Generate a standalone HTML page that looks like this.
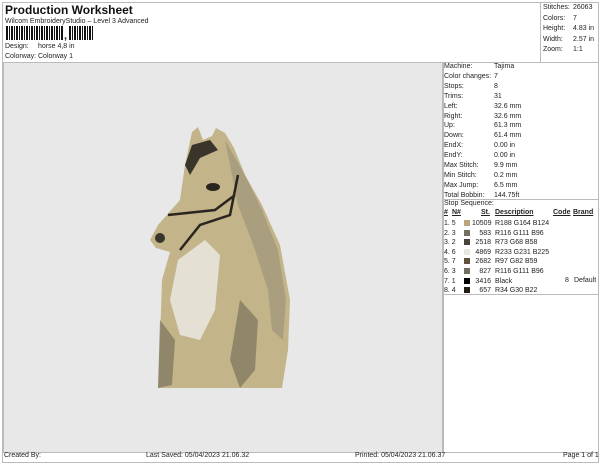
<!DOCTYPE html>
<html><head><style>
body{margin:0;width:600px;height:464px;background:#fff;font-family:"Liberation Sans",Arial,sans-serif;color:#222;position:relative;overflow:hidden}
.a{position:absolute;font-size:7px;white-space:nowrap}
.b{position:absolute;border:1px solid #bbb}
</style></head><body>
<div class="b" style="left:2px;top:2px;width:595px;height:459px"></div>
<div class="b" style="left:540px;top:2px;width:57px;height:59px"></div>
<div class="a" style="left:5px;top:3px;font-size:12px;font-weight:bold;color:#111">Production Worksheet</div>
<div class="a" style="left:5px;top:18px">Wilcom EmbroideryStudio – Level 3 Advanced</div>
<div style="position:absolute;left:6px;top:26px;width:58px;height:14px;background:repeating-linear-gradient(90deg,#111 0 2px,#fff 2px 3px,#111 3px 4px,#fff 4px 5px)"></div>
<div class="a" style="left:64px;top:30px;font-size:11px;font-weight:bold">,</div>
<div style="position:absolute;left:69px;top:26px;width:25px;height:14px;background:repeating-linear-gradient(90deg,#111 0 2px,#fff 2px 3px,#111 3px 4px,#fff 4px 5px)"></div>
<div class="a" style="left:5px;top:43px">Design:</div><div class="a" style="left:38px;top:43px">horse 4,8 in</div>
<div class="a" style="left:5px;top:53px">Colorway:</div><div class="a" style="left:38px;top:53px">Colorway 1</div>
<div class="a" style="left:543px;top:3px;line-height:10.5px">Stitches:<br>Colors:<br>Height:<br>Width:<br>Zoom:</div>
<div class="a" style="left:573px;top:3px;line-height:10.5px">26063<br>7<br>4.83 in<br>2.57 in<br>1:1</div>
<div style="position:absolute;left:3px;top:62px;width:439px;height:389px;background:#e8e8e8;border:1px solid #bbb"></div>
<div class="b" style="left:442px;top:62px;width:155px;height:389px"></div>
<div style="position:absolute;left:442px;top:199px;width:156px;border-top:1px solid #bbb"></div>
<div style="position:absolute;left:442px;top:294px;width:156px;border-top:1px solid #bbb"></div>
<div class="a" style="left:444px;top:62px;line-height:9.9px">Machine:<br>Color changes:<br>Stops:<br>Trims:<br>Left:<br>Right:<br>Up:<br>Down:<br>EndX:<br>EndY:<br>Max Stitch:<br>Min Stitch:<br>Max Jump:<br>Total Bobbin:</div>
<div class="a" style="left:494px;top:62px;line-height:9.9px">Tajima<br>7<br>8<br>31<br>32.6 mm<br>32.6 mm<br>61.3 mm<br>61.4 mm<br>0.00 in<br>0.00 in<br>9.9 mm<br>0.2 mm<br>6.5 mm<br>144.75ft</div>
<div class="a" style="left:444px;top:200px">Stop Sequence:</div>
<div class="a" style="left:444px;top:209px;font-weight:bold;text-decoration:underline">#</div>
<div class="a" style="left:452px;top:209px;font-weight:bold;text-decoration:underline">N#</div>
<div class="a" style="left:481px;top:209px;font-weight:bold;text-decoration:underline">St.</div>
<div class="a" style="left:495px;top:209px;font-weight:bold;text-decoration:underline">Description</div>
<div class="a" style="left:553px;top:209px;font-weight:bold;text-decoration:underline">Code</div>
<div class="a" style="left:573px;top:209px;font-weight:bold;text-decoration:underline">Brand</div>
<div class="a" style="left:444px;top:219px;line-height:9.6px">1. 5<br>2. 3<br>3. 2<br>4. 6<br>5. 7<br>6. 3<br>7. 1<br>8. 4</div>
<div style="position:absolute;left:464px;top:220px;width:6px">
<div style="height:6px;background:#bca47c;margin-bottom:3.6px"></div>
<div style="height:6px;background:#746f60;margin-bottom:3.6px"></div>
<div style="height:6px;background:#49443a;margin-bottom:3.6px"></div>
<div style="height:6px;background:#e9e7e1;margin-bottom:3.6px"></div>
<div style="height:6px;background:#61523b;margin-bottom:3.6px"></div>
<div style="height:6px;background:#746f60;margin-bottom:3.6px"></div>
<div style="height:6px;background:#000;margin-bottom:3.6px"></div>
<div style="height:6px;background:#221e16"></div></div>
<div class="a" style="left:472px;top:219px;line-height:9.6px;width:19px;text-align:right">10509<br>583<br>2518<br>4869<br>2682<br>827<br>3416<br>657</div>
<div class="a" style="left:495px;top:219px;line-height:9.6px">R188 G164 B124<br>R116 G111 B96<br>R73 G68 B58<br>R233 G231 B225<br>R97 G82 B59<br>R116 G111 B96<br>Black<br>R34 G30 B22</div>
<div class="a" style="left:565px;top:276.6px">8</div><div class="a" style="left:574px;top:276.6px">Default</div>
<div class="a" style="left:4px;top:452px">Created By:</div>
<div class="a" style="left:146px;top:452px">Last Saved: 05/04/2023 21.06.32</div>
<div class="a" style="left:355px;top:452px">Printed: 05/04/2023 21.06.37</div>
<div class="a" style="left:563px;top:452px">Page 1 of 1</div>
<svg style="position:absolute;left:0;top:0" width="600" height="464">
<path d="M192 132 L198 127 L203 140 L212 136 L216 128 L225 133 L234 148 L245 175 L262 205 L280 245 L290 300 L288 350 L282 388 L158 388 L160 340 L162 280 L170 252 L156 248 L150 240 L158 225 L180 200 L185 165 Z" fill="#c4b48a"/>
<path d="M178 260 L205 240 L220 255 L215 310 L200 340 L180 335 L170 300 Z" fill="#e4e1d4"/>
<path d="M225 140 L245 175 L262 210 L278 250 L286 300 L283 340 L272 330 L268 290 L255 250 L238 205 Z" fill="#9e9479" opacity=".7"/>
<path d="M160 320 L175 340 L172 385 L158 388 Z M240 300 L258 320 L255 370 L240 388 L230 360 Z" fill="#7b735d" opacity=".7"/>
<path d="M185 165 L192 145 L210 140 L218 150 L200 158 L190 175 Z" fill="#3a352b"/>
<ellipse cx="213" cy="187" rx="7" ry="4" fill="#2a261f"/>
<path d="M168 215 L215 210 L235 195 M180 250 L200 225 L230 215 L238 175" stroke="#2a261f" stroke-width="2.5" fill="none"/>
<ellipse cx="160" cy="238" rx="5" ry="5" fill="#3a352b"/>
</svg>
</body></html>
